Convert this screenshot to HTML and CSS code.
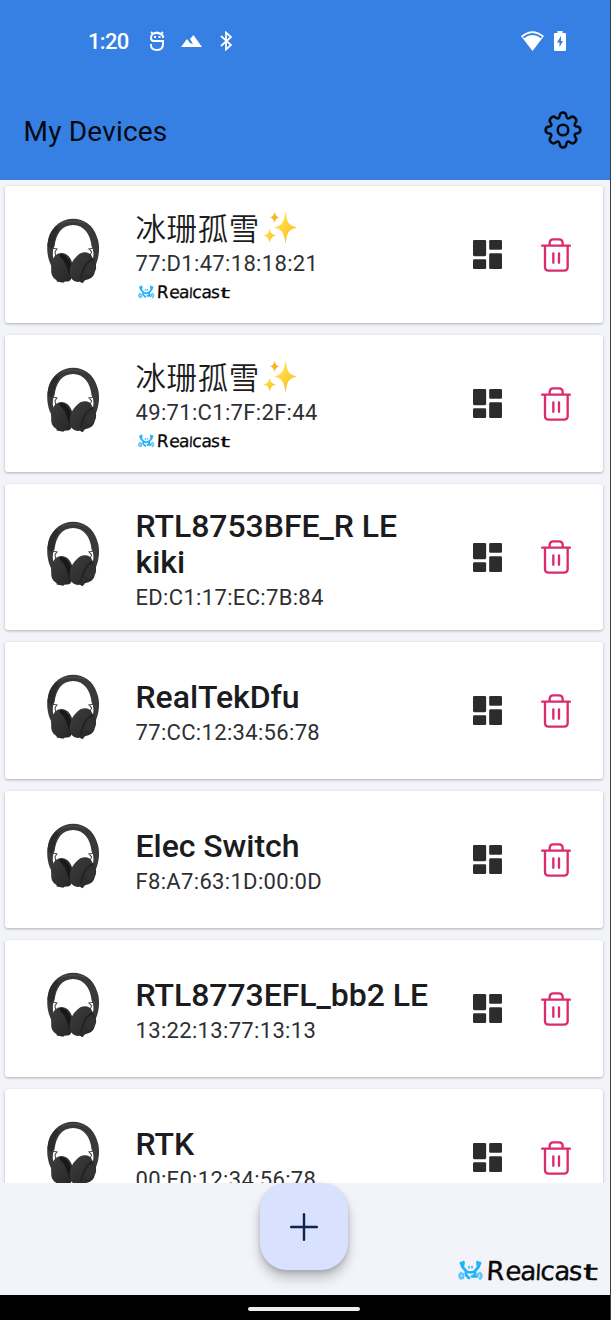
FILE: index.html
```html
<!DOCTYPE html>
<html lang="en">
<head>
<meta charset="utf-8">
<title>My Devices</title>
<link rel="stylesheet" href="styles.css">
</head>
<body>
<svg class="defs" aria-hidden="true">
  <defs>
    <linearGradient id="cup" x1="0" y1="0" x2="1" y2="1"><stop offset="0" stop-color="#3e3e3e"/><stop offset="1" stop-color="#242424"/></linearGradient>
    <linearGradient id="spark" x1="0" y1="0" x2="1" y2="1"><stop offset="0.3" stop-color="#ffdf45"/><stop offset="1" stop-color="#f8b61c"/></linearGradient>
  </defs>
  <symbol id="headphones" viewBox="0 0 210 270">
    <path d="M34 182C20 156 17 120 27 96C38 60 66 41 98 41C130 41 158 60 169 96C179 120 176 156 163 182L153 174C160 154 160 134 153 124C149 84 129 59 98 59C66 59 47 84 43 122C36 134 36 154 43 174Z" fill="#393939"/>
    <path d="M22 122C23 90 33 73 49 62L57 71C46 84 44 99 41 119L34 131Z" fill="#2b2b2b"/>
    <path d="M64 54C84 46 112 46 132 54" fill="none" stroke="#4b4b4b" stroke-width="4"/>
    <path d="M36 128L50 130L44 139L47 153M162 128L145 130L153 139L148 150" fill="none" stroke="#444" stroke-width="3"/>
    <path d="M46 149C64 134 88 145 95 171C101 197 98 219 86 226L72 228L69 231L49 227L49 223C36 215 32 205 33 190C31 172 36 159 46 149Z" fill="url(#cup)"/>
    <path d="M60 145C86 148 100 183 91 212C82 202 80 176 67 162C58 153 55 149 60 145Z" fill="#181818"/>
    <path d="M108 153C122 135 149 136 155 156C166 166 170 187 162 199C160 213 148 222 133 223L126 232L118 228C100 230 89 219 88 201C87 182 96 164 108 153Z" fill="url(#cup)"/>
    <path d="M121 218C128 187 136 166 157 160" fill="none" stroke="#1a1a1a" stroke-width="3"/>
    <ellipse cx="150" cy="190" rx="13" ry="20" transform="rotate(20 150 190)" fill="#323232"/>
  </symbol>
  <symbol id="board" viewBox="0 0 86 86">
    <g fill="#2c2c2c"><rect width="39" height="48" rx="4"/><rect y="57" width="39" height="29" rx="4"/><rect x="48" width="38" height="29" rx="4"/><rect x="48" y="39" width="38" height="47" rx="4"/></g>
  </symbol>
  <symbol id="trash" viewBox="0 0 90 102">
    <g fill="none" stroke="#db2b6d" stroke-width="7" stroke-linecap="round"><path d="M3.500 23H86.500M12 24V87Q12 98 23 98H69Q80 98 80 87V24M26 22V15Q26 4 37 4H54Q65 4 65 15V22M37 46V74M54 46V74"/></g>
  </symbol>
  <symbol id="sparkles" viewBox="0 0 102 100">
    <g fill="url(#spark)"><path d="M68 1C73 35 75 43 102 50C75 57 73 66 68 99C62 66 59 57 34 50C59 43 62 35 68 1Z"/><path d="M20 53C23 68 26 71 39 74C26 78 23 81 20 96C16 81 13 78 0 74C13 71 16 68 20 53Z"/><path d="M35 3C38 15 40 17 49 19C40 22 38 25 35 36C31 25 29 22 21 19C29 17 31 15 35 3Z" fill="#f7b522"/></g>
  </symbol>
  <symbol id="crab" viewBox="0 0 25 21">
    <g fill="none" stroke="#22b1fb" stroke-width="2.700" stroke-linecap="round" stroke-linejoin="round"><path d="M3 3L4.500 7L8 11M5.500 2L5 6.500M22 3L20.500 7L17 11M19.500 2L20 6.500M8 11Q12.500 14 17 11M8 11V15L11 18M17 11V15L14 16.500H19"/><path d="M3 13Q0 15.500 3 18.500M5 14V18M22 13Q25 15.500 22 18.500M20 14V16" stroke="#62c6fb"/><path d="M11 6.500V8M14 6.500V8" stroke-width="1.500"/></g>
  </symbol>
</svg>
<div class="phone">
  <header class="header">
    <div class="status">
      <span class="clock">1:20</span>
      <svg class="s-icon" viewBox="0 0 16 20" fill="none" stroke="#fff" stroke-width="1.900"><path d="M2 1L4 3Q8 0 12 3L14 1M14 7V5Q12 2 8 2Q2 2 2 7Q2 10 5 10H14V13Q14 19 8 19Q2 19 2 14V13"/><path d="M5 6H7M9.500 6H11.500"/></svg>
      <svg class="peaks" viewBox="0 0 21 12"><path d="M0 12L6 4L9 8L12 9L9 4L12.500 0L21 12Z" fill="#fff"/></svg>
      <svg class="bluetooth" viewBox="0 0 12 20" fill="none" stroke="#fff" stroke-width="1.700"><path d="M1 5L11 14L6 18.500V1.500L11 6L1 15"/></svg>
      <svg class="wifi" viewBox="0 0 23 20"><path d="M0 5Q11.500-4.500 23 5L11.500 20Z" fill="#fff"/><path d="M2.500 6.500Q11.500-.5 20.500 6.500" stroke="#367fe3" stroke-width="1.800" fill="none"/></svg>
      <svg class="battery" viewBox="0 0 12 20"><path d="M3.500 0H8.500V2H11Q12 2 12 3V19Q12 20 11 20H1Q0 20 0 19V3Q0 2 1 2H3.500Z" fill="#fff"/><path d="M7 5L3 11.500H5.500V16L9 10H7Z" fill="#367fe3"/></svg>
    </div>
    <div class="toolbar">
      <h1 class="heading">My Devices</h1>
      <svg class="gear" viewBox="0 0 38 38" fill="none" stroke="#050a12" stroke-width="2.500" stroke-linejoin="round"><circle cx="19" cy="19" r="5.300"/><path d="M15.600 5.200C16 0.400 22 0.400 22.400 5.200C22.600 7.500 24.200 8 26 6.700C29.500 3.800 34.200 8.500 31.300 12C30 13.800 30.500 15.400 32.800 15.600C37.600 16 37.600 22 32.800 22.400C30.500 22.600 30 24.200 31.300 26C34.200 29.500 29.500 34.200 26 31.300C24.200 30 22.600 30.500 22.400 32.800C22 37.600 16 37.600 15.600 32.800C15.400 30.500 13.800 30 12 31.300C8.500 34.200 3.800 29.500 6.700 26C8 24.200 7.500 22.600 5.200 22.400C.4 22 .4 16 5.200 15.600C7.500 15.400 8 13.800 6.700 12C3.800 8.500 8.500 3.800 12 6.700C13.800 8 15.400 7.500 15.600 5.200Z"/></svg>
    </div>
  </header>
  <main class="list">
    <article class="card">
      <svg class="photo"><use href="#headphones"/></svg>
      <div class="info"><h2 class="name cjk">冰珊孤雪<svg class="sparkles"><use href="#sparkles"/></svg></h2><p class="mac">77:D1:47:18:18:21</p>
        <svg class="brand" viewBox="0 0 141 21"><use href="#crab" width="25" height="21"/><text class="wordmark" y="20" transform="translate(1 0) skewX(-3)"><tspan x="28" font-size="26">R</tspan><tspan x="47 62" font-size="26">ea</tspan><tspan x="77" font-size="21">l</tspan><tspan x="82 96 110.500" font-size="26">cas</tspan><tspan x="124.500" font-size="22" textLength="15" lengthAdjust="spacingAndGlyphs">t</tspan></text></svg></div>
      <svg class="board"><use href="#board"/></svg><svg class="trash"><use href="#trash"/></svg>
    </article>
    <article class="card">
      <svg class="photo"><use href="#headphones"/></svg>
      <div class="info"><h2 class="name cjk">冰珊孤雪<svg class="sparkles"><use href="#sparkles"/></svg></h2><p class="mac">49:71:C1:7F:2F:44</p>
        <svg class="brand" viewBox="0 0 141 21"><use href="#crab" width="25" height="21"/><text class="wordmark" y="20" transform="translate(1 0) skewX(-3)"><tspan x="28" font-size="26">R</tspan><tspan x="47 62" font-size="26">ea</tspan><tspan x="77" font-size="21">l</tspan><tspan x="82 96 110.500" font-size="26">cas</tspan><tspan x="124.500" font-size="22" textLength="15" lengthAdjust="spacingAndGlyphs">t</tspan></text></svg></div>
      <svg class="board"><use href="#board"/></svg><svg class="trash"><use href="#trash"/></svg>
    </article>
    <article class="card tall">
      <svg class="photo"><use href="#headphones"/></svg>
      <div class="info"><h2 class="name">RTL8753BFE_R LE<br>kiki</h2><p class="mac">ED:C1:17:EC:7B:84</p></div>
      <svg class="board"><use href="#board"/></svg><svg class="trash"><use href="#trash"/></svg>
    </article>
    <article class="card">
      <svg class="photo"><use href="#headphones"/></svg>
      <div class="info"><h2 class="name">RealTekDfu</h2><p class="mac">77:CC:12:34:56:78</p></div>
      <svg class="board"><use href="#board"/></svg><svg class="trash"><use href="#trash"/></svg>
    </article>
    <article class="card">
      <svg class="photo"><use href="#headphones"/></svg>
      <div class="info"><h2 class="name">Elec Switch</h2><p class="mac">F8:A7:63:1D:00:0D</p></div>
      <svg class="board"><use href="#board"/></svg><svg class="trash"><use href="#trash"/></svg>
    </article>
    <article class="card">
      <svg class="photo"><use href="#headphones"/></svg>
      <div class="info"><h2 class="name">RTL8773EFL_bb2 LE</h2><p class="mac">13:22:13:77:13:13</p></div>
      <svg class="board"><use href="#board"/></svg><svg class="trash"><use href="#trash"/></svg>
    </article>
    <article class="card">
      <svg class="photo"><use href="#headphones"/></svg>
      <div class="info"><h2 class="name">RTK</h2><p class="mac">00:E0:12:34:56:78</p></div>
      <svg class="board"><use href="#board"/></svg><svg class="trash"><use href="#trash"/></svg>
    </article>
  </main>
  <footer class="footer">
    <button class="add" aria-label="Add device"><svg class="plus" viewBox="0 0 28 28"><path d="M14 1.200V26.800M1.200 14H26.800" stroke="#0d234b" stroke-width="2.400" stroke-linecap="round"/></svg></button>
    <svg class="logo" viewBox="0 0 141 21"><use href="#crab" width="25" height="21"/><text class="wordmark" y="20" transform="translate(1 0) skewX(-3)"><tspan x="28" font-size="26">R</tspan><tspan x="47 62" font-size="26">ea</tspan><tspan x="77" font-size="21">l</tspan><tspan x="82 96 110.500" font-size="26">cas</tspan><tspan x="124.500" font-size="22" textLength="15" lengthAdjust="spacingAndGlyphs">t</tspan></text></svg>
  </footer>
  <nav class="navbar"><span class="handle"></span></nav>
</div>
</body>
</html>
```
FILE: styles.css
```css
* { box-sizing: border-box; }
body { margin: 0; font-family: Roboto, "Noto Sans CJK SC", sans-serif; }
svg { display: block; flex: none; }
h1, h2, p { margin: 0; }
.defs { position: absolute; width: 0; height: 0; }
.phone { width: 611px; height: 1320px; display: flex; flex-direction: column; overflow: hidden; background: #f3f4f9; border-right: 1px solid #3d4148; }
.header { height: 180px; flex: none; background: #367fe3; }
.status { height: 82px; display: flex; align-items: center; padding-left: 88px; color: #fff; }
.clock { width: 61px; font-size: 22px; font-weight: 500; letter-spacing: -0.700px; }
.s-icon { width: 16px; height: 20px; }
.peaks { width: 21px; height: 12px; margin-left: 16px; }
.bluetooth { width: 12px; height: 20px; margin-left: 18px; }
.wifi { width: 23px; height: 20px; margin-left: 289px; }
.battery { width: 12px; height: 20px; margin-left: 9.500px; }
.toolbar { height: 98px; display: flex; align-items: center; justify-content: space-between; padding: 0 28.500px 2px 23.500px; }
.heading { font-size: 28px; font-weight: 400; line-height: 36px; letter-spacing: 0.200px; padding-top: 4px; color: #050a12; }
.gear { width: 38px; height: 38px; }
.list { height: 1003px; flex: none; overflow: hidden; padding: 6px 7px 0 5px; display: flex; flex-direction: column; gap: 12px; }
.card { height: 137px; flex: none; display: flex; align-items: center; background: #fff; border-radius: 3px; box-shadow: 0 1px 3px rgba(0, 0, 0, 0.28); padding: 0 31px 0 35px; }
.card.tall { height: 146px; }
.photo { width: 71px; height: 91px; margin-bottom: 8px; }
.info { width: 361.500px; padding: 3.500px 0 0 24.500px; flex: none; white-space: nowrap; }
.name { font-size: 32px; line-height: 36px; font-weight: 500; letter-spacing: -0.050px; color: #1b1c20; }
.cjk { font-family: "Noto Sans CJK SC", sans-serif; font-weight: 350; font-size: 30.500px; line-height: 34px; padding-bottom: 2px; letter-spacing: 0.600px; display: flex; align-items: center; }
.sparkles { width: 34px; height: 33px; margin-left: 3.500px; }
.mac { font-size: 22px; line-height: 26px; margin: 5px 0 -1px; letter-spacing: 0.330px; color: #2e2f33; }
.brand { width: 93px; height: 14px; margin: 9px 0 3px 2.500px; overflow: visible; }
.board { width: 29px; height: 29px; }
.trash { width: 30px; height: 34px; margin: 0 0 0 39px; }
.wordmark { font-family: "DejaVu Sans", sans-serif; fill: #080808; stroke: #080808; stroke-width: 0.400px; }
.footer { height: 112px; flex: none; display: flex; padding-left: 260px; }
.add { width: 88px; height: 87px; padding: 0; border: 0; border-radius: 27px; background: #d8e1fe; box-shadow: 0 8px 12px rgba(0, 0, 0, 0.22), 0 2px 5px rgba(0, 0, 0, 0.15); display: flex; align-items: center; justify-content: center; }
.plus { width: 28px; height: 28px; }
.logo { width: 141px; height: 21px; margin: 77px 0 0 110px; overflow: visible; }
.navbar { height: 25px; flex: none; background: #000; display: flex; justify-content: center; padding: 12px 2px 0 0; }
.handle { width: 112px; height: 4px; border-radius: 2px; background: #eee; }
```
